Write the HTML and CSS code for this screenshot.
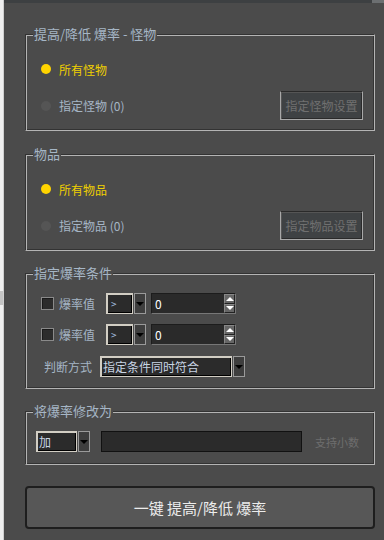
FILE: index.html
```html
<!DOCTYPE html>
<html lang="zh-CN">
<head>
<meta charset="utf-8">
<title>爆率</title>
<link rel="stylesheet" href="styles.css">
</head>
<body>
<div class="screen">
  <div class="side">
    <span class="sel"></span>
  </div>
  <div class="panel">
    <div class="topbar"><span class="topbar-tab"></span></div>
    <div class="content">
      <fieldset class="group g1">
        <legend>提高/降低 爆率 - 怪物</legend>
        <div class="radio on"><span class="dot"></span><span class="rlabel">所有怪物</span></div>
        <div class="row-split">
          <div class="radio off"><span class="dot"></span><span class="rlabel">指定怪物 (0)</span></div>
          <div class="btn-set">指定怪物设置</div>
        </div>
      </fieldset>

      <fieldset class="group g2">
        <legend>物品</legend>
        <div class="radio on"><span class="dot"></span><span class="rlabel">所有物品</span></div>
        <div class="row-split">
          <div class="radio off"><span class="dot"></span><span class="rlabel">指定物品 (0)</span></div>
          <div class="btn-set">指定物品设置</div>
        </div>
      </fieldset>

      <fieldset class="group g3">
        <legend>指定爆率条件</legend>
        <div class="cond-row first">
          <span class="check"></span>
          <span class="clabel">爆率值</span>
          <div class="combo op"><span class="combo-text">&gt;</span><span class="combo-arrow"><span class="tri"></span></span></div>
          <div class="spin"><span class="spin-val">0</span><span class="spin-btns"><span class="sb up"><span class="tri-up"></span></span><span class="sb down"><span class="tri"></span></span></span></div>
        </div>
        <div class="cond-row second">
          <span class="check"></span>
          <span class="clabel">爆率值</span>
          <div class="combo op"><span class="combo-text">&gt;</span><span class="combo-arrow"><span class="tri"></span></span></div>
          <div class="spin"><span class="spin-val">0</span><span class="spin-btns"><span class="sb up"><span class="tri-up"></span></span><span class="sb down"><span class="tri"></span></span></span></div>
        </div>
        <div class="cond-row third">
          <span class="jlabel">判断方式</span>
          <div class="combo mode"><span class="combo-text">指定条件同时符合</span><span class="combo-arrow"><span class="tri"></span></span></div>
        </div>
      </fieldset>

      <fieldset class="group g4">
        <legend>将爆率修改为</legend>
        <div class="mod-row">
          <div class="combo add"><span class="combo-text">加</span><span class="combo-arrow"><span class="tri"></span></span></div>
          <div class="textbox"></div>
          <span class="hint">支持小数</span>
        </div>
      </fieldset>

      <div class="big-btn">一键 提高/降低 爆率</div>
    </div>
  </div>
</div>
</body>
</html>
```

FILE: styles.css
```css
* { box-sizing: border-box; }
html, body { margin: 0; padding: 0; }
body {
  width: 384px;
  height: 540px;
  overflow: hidden;
  background: #4b4b4b;
  font-family: "Noto Sans CJK SC", "Noto Sans", sans-serif;
  font-size: 12px;
}
.screen {
  display: flex;
  width: 384px;
  height: 540px;
}
.side {
  width: 4px;
  flex: none;
  background: #efefef;
  border-right: 1px solid #cfcfcf;
  display: flex;
  flex-direction: column;
  overflow: hidden;
}
.sel { display: block; height: 14px; margin-top: 291px; background: #c4c4c4; }

.panel {
  flex: 1;
  display: flex;
  flex-direction: column;
  background: #4b4b4b;
}
.topbar {
  height: 3px;
  background: #3d4042;
  display: flex;
  justify-content: flex-end;
}
.topbar-tab { width: 12px; background: #6c6f71; }
.content {
  padding: 24px 9px 0 21px;
  display: flex;
  flex-direction: column;
}

.group {
  margin: 0;
  padding: 0 11px 10px 4px;
  min-inline-size: 0;
  border: 1px solid;
  border-color: #333 #b4b4b4 #b4b4b4 #333;
  box-shadow: inset 1px 1px 0 #b4b4b4, inset -1px -1px 0 #333;
}
.g1 { margin-bottom: 16px; }
.g2 { margin-bottom: 15px; }
.g3 { margin-bottom: 15px; padding-bottom: 11px; }
.g4 { margin-bottom: 21px; padding-bottom: 12px; }
.group legend {
  margin-left: 3px;
  padding: 0 1px;
  font-size: 13px;
  line-height: 14px;
  color: #a6b6c6;
  background: #4b4b4b;
}

.radio {
  display: flex;
  align-items: center;
  height: 20px;
  padding-left: 11px;
}
.radio.on { margin-top: 18px; }
.dot {
  width: 10px;
  height: 10px;
  border-radius: 50%;
  background: #ffd400;
  margin-right: 8px;
}
.radio.on .rlabel { color: #f0d000; }
.radio.off .dot { background: #555; }
.radio.off .rlabel { color: #a6b6c6; }
.row-split {
  display: flex;
  align-items: center;
  justify-content: space-between;
  height: 29px;
  margin-top: 12px;
}
.btn-set {
  width: 83px;
  height: 29px;
  display: flex;
  align-items: center;
  justify-content: center;
  background: #3f4244;
  color: #707070;
  border: 1px solid;
  border-color: #2a2a2a #a8a8a8 #a8a8a8 #a8a8a8;
  box-shadow: inset 1px 1px 0 #555, inset -1px -1px 0 #2a2a2a;
}

.cond-row {
  display: flex;
  align-items: center;
  height: 21px;
}
.cond-row.first { margin-top: 13px; }
.cond-row.second { margin-top: 10px; }
.cond-row.third { margin-top: 11px; }
.check {
  width: 13px;
  height: 13px;
  margin-left: 11px;
  background: #2c2c2c;
  border: 1px solid #8a8a8a;
  box-shadow: inset 1px 1px 0 #1a1a1a;
}
.clabel {
  margin-left: 5px;
  width: 47px;
  color: #a6b6c6;
}
.jlabel {
  margin-left: 14px;
  width: 56px;
  color: #a6b6c6;
}
.combo {
  display: flex;
  height: 21px;
}
.combo-text {
  flex: 1;
  display: flex;
  align-items: center;
  padding-left: 2px;
  background: #2b2b2b;
  border: 1px solid #d2cec4;
  box-shadow: inset 1px 1px 0 #d2cec4, inset -1px -1px 0 #000;
  color: #c8d4e4;
  white-space: nowrap;
  overflow: hidden;
}
.combo-arrow {
  width: 12px;
  display: flex;
  align-items: center;
  justify-content: center;
  background: #3e3e3e;
  border: 1px solid #9a9a9a;
  margin-left: 1px;
}
.tri {
  width: 0;
  height: 0;
  border-left: 4px solid transparent;
  border-right: 4px solid transparent;
  border-top: 4px solid #000;
}
.tri-up {
  width: 0;
  height: 0;
  border-left: 4px solid transparent;
  border-right: 4px solid transparent;
  border-bottom: 4px solid #fff;
}
.combo.op { width: 40px; }
.combo.op .combo-text { color: #a8c0e0; font-size: 10px; padding-left: 4px; }
.combo.mode { width: 145px; }
.combo.add { width: 54px; margin-left: 6px; }

.spin {
  width: 85px;
  height: 21px;
  margin-left: 5px;
  display: flex;
  background: #2a2a2a;
  border: 1px solid;
  border-color: #1c1c1c #777 #777 #1c1c1c;
}
.spin-val {
  flex: 1;
  color: #ffffff;
  padding-left: 3px;
  display: flex;
  align-items: center;
}
.spin-btns {
  width: 11px;
  display: flex;
  flex-direction: column;
}
.sb {
  flex: 1;
  display: flex;
  align-items: center;
  justify-content: center;
  background: #666;
  border: 1px solid #888;
  border-right-color: #222;
  border-bottom-color: #222;
}
.sb .tri { border-top-color: #fff; }

.mod-row {
  display: flex;
  align-items: center;
  height: 21px;
  margin-top: 13px;
}
.textbox {
  width: 201px;
  height: 21px;
  margin-left: 11px;
  background: #2b2b2b;
  border: 1px solid #111;
}
.hint {
  margin-left: 13px;
  color: #6e6e6e;
  font-size: 11px;
}

.big-btn {
  height: 43px;
  display: flex;
  align-items: center;
  justify-content: center;
  background: #575757;
  border: 2px solid #1e1e1e;
  border-radius: 4px;
  color: #ececec;
  font-size: 15px;
}
```
